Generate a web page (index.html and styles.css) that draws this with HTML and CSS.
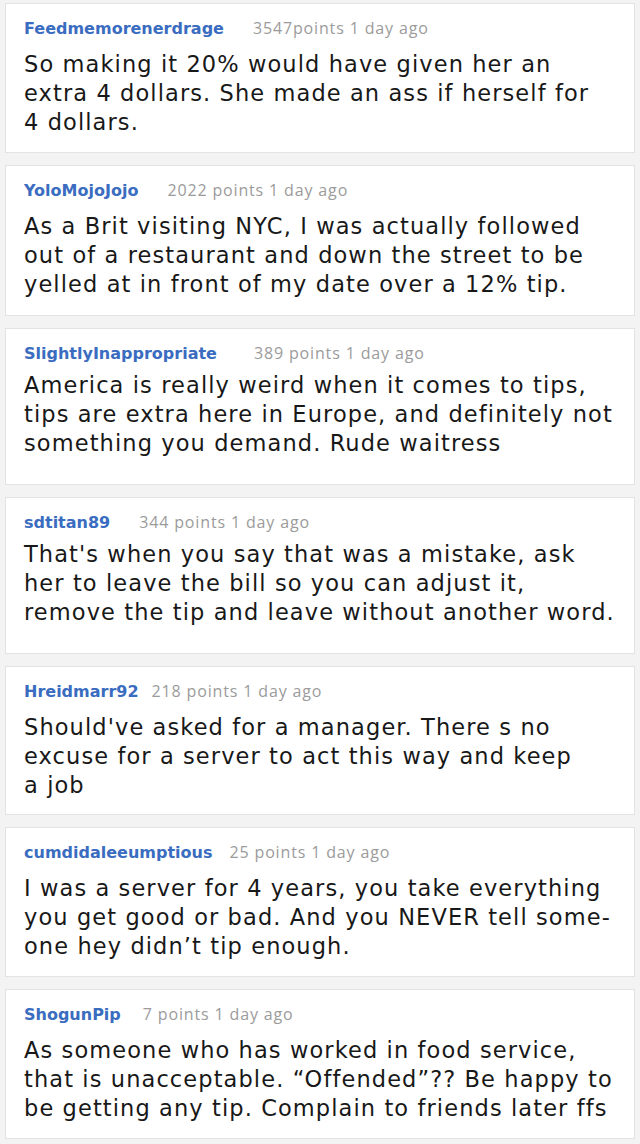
FILE: index.html
```html
<!DOCTYPE html>
<html lang="en">
<head>
    <meta charset="UTF-8">
    <meta name="viewport" content="width=device-width, initial-scale=1.0">
    <title>Comments</title>
    <link rel="stylesheet" href="styles.css">
</head>
<body>

<div class="comments">
    <div class="comment">
        <div class="comment-head">
            <span class="user">Feedmemorenerdrage</span>
            <span class="meta">3547points 1 day ago</span>
        </div>
        <p class="text">So making it 20% would have given her an<br>extra 4 dollars. She made an ass if herself for<br>4 dollars.</p>
    </div>

    <div class="comment roomy">
        <div class="comment-head">
            <span class="user">YoloMojoJojo</span>
            <span class="meta">2022 points 1 day ago</span>
        </div>
        <p class="text">As a Brit visiting NYC, I was actually followed<br>out of a restaurant and down the street to be<br>yelled at in front of my date over a 12% tip.</p>
    </div>

    <div class="comment tall">
        <div class="comment-head wide">
            <span class="user">SlightlyInappropriate</span>
            <span class="meta">389 points 1 day ago</span>
        </div>
        <p class="text">America is really weird when it comes to tips,<br>tips are extra here in Europe, and definitely not<br>something you demand. Rude waitress</p>
    </div>

    <div class="comment tall">
        <div class="comment-head">
            <span class="user">sdtitan89</span>
            <span class="meta">344 points 1 day ago</span>
        </div>
        <p class="text">That's when you say that was a mistake, ask<br>her to leave the bill so you can adjust it,<br>remove the tip and leave without another word.</p>
    </div>

    <div class="comment short">
        <div class="comment-head tighter">
            <span class="user">Hreidmarr92</span>
            <span class="meta">218 points 1 day ago</span>
        </div>
        <p class="text">Should've asked for a manager. There s no<br>excuse for a server to act this way and keep<br>a job</p>
    </div>

    <div class="comment">
        <div class="comment-head tight">
            <span class="user">cumdidaleeumptious</span>
            <span class="meta">25 points 1 day ago</span>
        </div>
        <p class="text">I was a server for 4 years, you take everything<br>you get good or bad. And you NEVER tell some-<br>one hey didn’t tip enough.</p>
    </div>

    <div class="comment">
        <div class="comment-head mid">
            <span class="user">ShogunPip</span>
            <span class="meta">7 points 1 day ago</span>
        </div>
        <p class="text">As someone who has worked in food service,<br>that is unacceptable. “Offended”?? Be happy to<br>be getting any tip. Complain to friends later ffs</p>
    </div>
</div>

</body>
</html>
```

FILE: styles.css
```css
body {
    margin: 0;
    background-color: #f3f3f3;
    font-family: "DejaVu Sans", sans-serif;
    color: #181818;
}

.comments {
    display: flex;
    flex-direction: column;
    gap: 12px;
    padding: 3px 5px;
}

.comment {
    background-color: #fff;
    border: 1px solid #e3e3e3;
    padding: 14px 18px 15px;
}

.comment.roomy {
    padding-bottom: 16px;
}

.comment.short {
    padding-bottom: 14px;
}

.comment.tall {
    padding-bottom: 26px;
}

.comment.tall .text {
    margin-top: 8px;
}

/* name + points line */
.comment-head {
    display: flex;
    align-items: baseline;
    gap: 29px;
    height: 20px;
    line-height: 20px;
}

.comment-head.wide {
    gap: 37px;
}

.comment-head.mid {
    gap: 22px;
}

.comment-head.tight {
    gap: 17px;
}

.comment-head.tighter {
    gap: 13px;
}

.user {
    color: #3a6cbf;
    font-weight: bold;
    font-size: 16px;
}

.meta {
    color: #9b9b9b;
    font-family: "Open Sans", sans-serif;
    font-size: 16px;
    letter-spacing: 0.85px;
}

.text {
    margin: 12px 0 0;
    font-size: 22.5px;
    line-height: 29px;
    letter-spacing: 1.1px;
    white-space: nowrap;
}
```
